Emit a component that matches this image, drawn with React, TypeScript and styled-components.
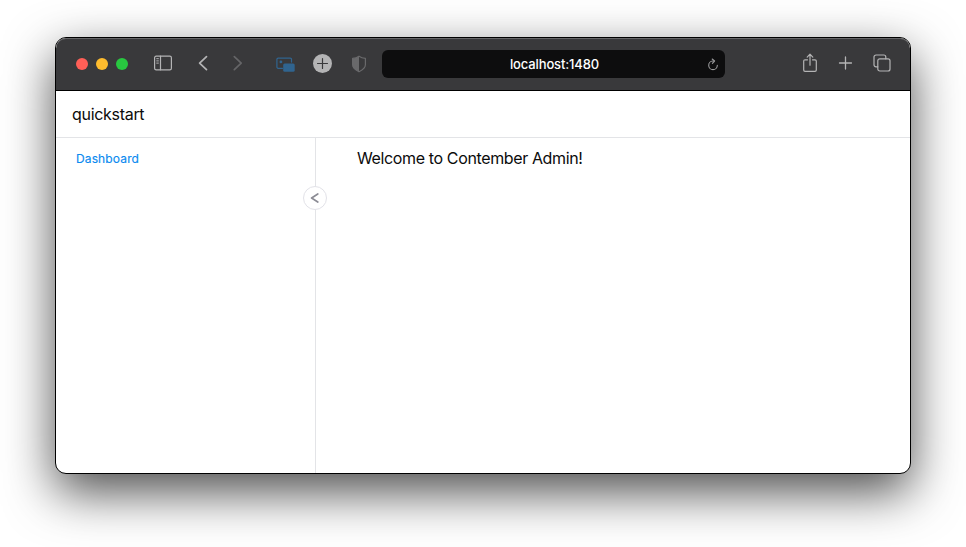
import React from 'react';
import styled, { createGlobalStyle } from 'styled-components';

const GlobalStyle = createGlobalStyle`
  * { box-sizing: border-box; }
  body { margin: 0; background: #fff; font-family: Inter, "Liberation Sans", sans-serif; }
  svg { display: block; flex: none; }
`;

const Desktop = styled.div`
  height: 547px;
  padding: 37px 55px 73px;
  overflow: hidden;
`;

const Window = styled.div`
  display: flex;
  flex-direction: column;
  width: 856px;
  height: 437px;
  border: 1px solid #000;
  border-radius: 11px;
  overflow: hidden;
  background: #fff;
  box-shadow: 0 18px 50px rgba(0, 0, 0, 0.7);
`;

const Toolbar = styled.div`
  display: flex;
  align-items: center;
  flex: none;
  height: 53px;
  padding: 0 19px 0 20px;
  background: #39393b;
  border-bottom: 1px solid #000;
  border-radius: 10px 10px 0 0;
  box-shadow: inset 0 1px 0 #656567;
  color: #b4b4b5;
`;

const Lights = styled.div`
  display: flex;
  gap: 8px;
`;

const Light = styled.span<{ $color: string }>`
  width: 12px;
  height: 12px;
  border-radius: 50%;
  background: ${(p) => p.$color};
`;

const Slot = styled.span<{ $gap: number; $color?: string }>`
  display: flex;
  margin-left: ${(p) => p.$gap}px;
  padding-bottom: 1px;
  color: ${(p) => p.$color ?? 'inherit'};
`;

const AddressBar = styled.div`
  display: grid;
  grid-template-columns: 1fr auto 1fr;
  align-items: center;
  width: 343px;
  height: 28px;
  margin-left: 15px;
  padding: 0 6px;
  border-radius: 6px;
  background: #0d0d0e;
`;

const Address = styled.span`
  grid-column: 2;
  color: #fff;
  font-size: 13px;
  font-weight: 500;
  line-height: 16px;
  letter-spacing: -0.13px;
  padding-left: 2px;
`;

const Reload = styled.span`
  justify-self: end;
  padding-top: 1px;
  color: #9a9a9b;
`;

const Actions = styled.div`
  display: flex;
  align-items: center;
  gap: 20px;
  margin-left: auto;
  padding-bottom: 2px;
`;

const Header = styled.header`
  display: flex;
  align-items: center;
  flex: none;
  height: 47px;
  padding: 0 16px;
  border-bottom: 1px solid #e3e4e7;
`;

const Body = styled.div`
  display: flex;
  flex: 1;
`;

const Sidebar = styled.nav`
  position: relative;
  width: 260px;
  padding: 12px 20px;
  border-right: 1px solid #e3e4e7;
`;

const NavLink = styled.a`
  display: block;
  color: #0a8af0;
  font-size: 12px;
  line-height: 18px;
  letter-spacing: 0.13px;
  -webkit-text-stroke: 0.15px currentColor;
`;

const Collapse = styled.button`
  position: absolute;
  top: 48px;
  right: -12px;
  display: flex;
  align-items: center;
  justify-content: center;
  width: 24px;
  height: 24px;
  padding: 0;
  border: 1px solid #e2e2e8;
  border-radius: 50%;
  background: #fff;
  color: #8c8c95;
`;

const Main = styled.main`
  flex: 1;
  padding: 8px 41px;
`;

const Title = styled.span<{ $spacing: number }>`
  display: block;
  color: #0b0b0b;
  font-size: 16px;
  line-height: 24px;
  letter-spacing: ${(p) => p.$spacing}px;
  white-space: nowrap;
`;

const stroke = { fill: 'none', stroke: 'currentColor', strokeWidth: 1.2, strokeLinecap: 'round', strokeLinejoin: 'round' } as const;

const SidebarIcon = () => (
  <svg width="18" height="17" viewBox="0 0 18 17" {...stroke}>
    <rect x=".6" y="1.2" width="16.8" height="13.6" rx="1.6" />
    <path d="M6.5 1.2v13.6" />
    <path d="M2.7 3.7h1.7M2.7 5.9h1.7M2.7 8.1h1.7" strokeWidth="1" />
  </svg>
);

const Chevron = ({ right }: { right?: boolean }) => (
  <svg width="10" height="17" viewBox="0 0 10 17" {...stroke} strokeWidth="1.7">
    <path d={right ? 'M1.3 1.7 8.2 8.2l-6.9 6.5' : 'M8.5 1.7 1.6 8.2l6.9 6.5'} />
  </svg>
);

const PictureIcon = () => (
  <svg width="20" height="16" viewBox="0 0 20 16" {...stroke}>
    <path d="M6.5 12.3H2.1A1.2 1.2 0 0 1 .9 11.1V3.3A1.2 1.2 0 0 1 2.1 2.1h12.2a1.2 1.2 0 0 1 1.2 1.2V6.1" />
    <circle cx="4.9" cy="5.9" r="1.4" fill="currentColor" stroke="none" />
    <rect x="7.2" y="7.6" width="11.5" height="8.2" rx="1.5" fill="currentColor" stroke="none" />
  </svg>
);

const CirclePlus = () => (
  <svg width="19" height="19" viewBox="0 0 19 19">
    <circle cx="9.5" cy="9.5" r="9.5" fill="currentColor" />
    <path d="M9.5 4.5v10M4.5 9.5h10" stroke="#39393b" strokeWidth="1.2" strokeLinecap="round" />
  </svg>
);

const Shield = () => (
  <svg width="16" height="18" viewBox="0 0 16 18" {...stroke}>
    <path d="M8 1.2c1.7 1.2 4 2 6.4 2.2v6.4c0 3.2-3.3 5.4-6.4 7-3.1-1.6-6.4-3.8-6.4-7V3.4C4 3.2 6.3 2.4 8 1.2Z" />
    <path d="M8 1.2v15.6c-3.1-1.6-6.4-3.8-6.4-7V3.4C4 3.2 6.3 2.4 8 1.2Z" fill="currentColor" stroke="none" />
  </svg>
);

const ReloadIcon = () => (
  <svg width="12" height="13" viewBox="0 0 12 13" {...stroke} strokeWidth="1.1">
    <path d="M6.5 3H5.8a4.3 4.3 0 1 0 4.5 4.4" />
    <path d="m5.2 1 2.4 2-2.2 2.3" />
  </svg>
);

const ShareIcon = () => (
  <svg width="15" height="20" viewBox="0 0 15 20" {...stroke}>
    <path d="M4.5 6.8H2A1.3 1.3 0 0 0 .7 8.1v9A1.3 1.3 0 0 0 2 18.4h10a1.300 1.300 0 0 0 1.300-1.300v-9A1.300 1.300 0 0 0 12 6.800H9.500M7 12.200V1.300M4.200 4.100 7 1.200l2.800 2.900" />
  </svg>
);

const PlusIcon = () => (
  <svg width="15" height="14" viewBox="0 0 15 14" {...stroke} strokeWidth="1.3">
    <path d="M7.5 1v12M1.5 7h12" />
  </svg>
);

const TabsIcon = () => (
  <svg width="18" height="18" viewBox="0 0 18 18" {...stroke}>
    <path d="M4.8 12.8H3A2 2 0 0 1 1 10.8V3a2 2 0 0 1 2-2h7.8a2 2 0 0 1 2 2v1.8" />
    <rect x="4.8" y="4.8" width="12.2" height="12.2" rx="2" />
  </svg>
);

const CollapseIcon = () => (
  <svg width="10" height="10" viewBox="0 0 10 10" {...stroke} strokeWidth="1.7">
    <path d="M7.8 1 1.6 5l6.2 4" />
  </svg>
);

export default function App() {
  return (
    <>
      <GlobalStyle />
      <Desktop>
        <Window>
          <Toolbar>
            <Lights>
              <Light $color="#ff5f57" />
              <Light $color="#febc2e" />
              <Light $color="#28c840" />
            </Lights>
            <Slot $gap={26}><SidebarIcon /></Slot>
            <Slot $gap={26}><Chevron /></Slot>
            <Slot $gap={25} $color="#656567"><Chevron right /></Slot>
            <Slot $gap={33} $color="#30648f"><PictureIcon /></Slot>
            <Slot $gap={17}><CirclePlus /></Slot>
            <Slot $gap={19} $color="#69696b"><Shield /></Slot>
            <AddressBar>
              <Address>localhost:1480</Address>
              <Reload><ReloadIcon /></Reload>
            </AddressBar>
            <Actions>
              <ShareIcon />
              <PlusIcon />
              <TabsIcon />
            </Actions>
          </Toolbar>
          <Header>
            <Title $spacing={-0.3}>quickstart</Title>
          </Header>
          <Body>
            <Sidebar>
              <NavLink>Dashboard</NavLink>
              <Collapse aria-label="Collapse sidebar"><CollapseIcon /></Collapse>
            </Sidebar>
            <Main>
              <Title $spacing={-0.37}>Welcome to Contember Admin!</Title>
            </Main>
          </Body>
        </Window>
      </Desktop>
    </>
  );
}
